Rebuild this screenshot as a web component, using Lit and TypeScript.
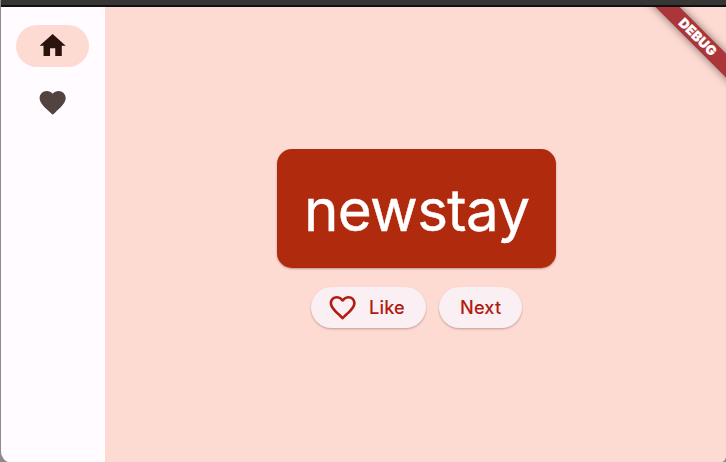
import { LitElement, html, css, svg } from "lit";
import { customElement } from "lit/decorators.js";

const homePath = svg`<path d="M10 20v-6h4v6h5v-8h3L12 3 2 12h3v8z"/>`;
const heartPath = svg`<path d="M12 21.35l-1.45-1.32C5.4 15.36 2 12.28 2 8.5 2 5.42 4.42 3 7.5 3c1.74 0 3.41.81 4.5 2.09C13.09 3.81 14.76 3 16.5 3 19.58 3 22 5.42 22 8.5c0 3.78-3.4 6.86-8.55 11.54L12 21.35z"/>`;
const heartOutlinePath = svg`<path d="M16.5 3c-1.74 0-3.41.81-4.5 2.09C10.91 3.81 9.24 3 7.5 3 4.42 3 2 5.42 2 8.5c0 3.78 3.4 6.86 8.55 11.54L12 21.35l1.45-1.32C18.6 15.36 22 12.28 22 8.5 22 5.42 19.58 3 16.5 3zm-4.4 15.55l-.1.1-.1-.1C7.14 14.24 4 11.39 4 8.5 4 6.5 5.5 5 7.5 5c1.54 0 3.04.99 3.57 2.36h1.87C13.46 5.99 14.96 5 16.5 5c2 0 3.5 1.5 3.5 3.5 0 2.89-3.14 5.74-7.9 10.05z"/>`;

@customElement("app-root")
export class AppRoot extends LitElement {
  static styles = css`
    :host {
      display: block;
      height: 462px;
      background: #8d8b8b;
      font-family: Inter, "Liberation Sans", sans-serif;
    }
    * { box-sizing: border-box; }
    .window {
      position: relative;
      display: flex;
      flex-direction: column;
      height: 462px;
      margin-left: 1px;
      overflow: hidden;
      border-radius: 0 0 5px 9px / 0 0 7px 12px;
      background: #fffbff;
    }
    .titlebar {
      flex: none;
      height: 7px;
      background: #363635;
      border-bottom: 2px solid #111;
    }
    .body { flex: 1; display: flex; min-height: 0; }
    .rail {
      width: 104.4px;
      padding: 17.5px 0.8px 0 0;
      display: flex;
      flex-direction: column;
      align-items: center;
      gap: 15.5px;
      background: #fffbff;
    }
    .dest {
      width: 73px;
      height: 42px;
      border-radius: 21px;
      display: flex;
      align-items: center;
      justify-content: center;
      color: #534340;
    }
    .selected { background: #fddad2; color: #2b130e; }
    svg { display: block; width: 31.3px; height: 31.3px; fill: currentColor; }
    .page {
      flex: 1;
      display: flex;
      flex-direction: column;
      align-items: center;
      padding: 141.5px 0 0 1.9px;
      gap: 18.5px;
      background: #fddad2;
    }
    .card {
      width: 279.5px;
      height: 119.5px;
      border-radius: 15px;
      background: #b02a0d;
      color: #fff;
      font-size: 58.4px;
      font-weight: 400;
      -webkit-text-stroke: 0.4px #fff;
      letter-spacing: -0.7px;
      line-height: 122.5px;
      text-align: center;
      white-space: nowrap;
      box-shadow: 0 1px 2px rgba(80, 20, 10, 0.35);
    }
    .actions { display: flex; gap: 13px; }
    .btn {
      display: flex;
      align-items: center;
      justify-content: center;
      height: 41.5px;
      border: 0;
      border-radius: 21px;
      padding: 0;
      background: #faeff3;
      color: #b01c12;
      font: 500 18.2px Inter, "Liberation Sans", sans-serif;
      letter-spacing: 0.13px;
      box-shadow: 0 1.3px 2px rgba(80, 20, 10, 0.28);
    }
    .like { width: 115px; gap: 10.4px; padding-right: 5px; }
    .next { width: 83px; }
    .clip {
      position: absolute;
      top: 7px;
      right: 0;
      width: 90px;
      height: 90px;
      overflow: hidden;
    }
    .banner {
      position: absolute;
      left: -8.5px;
      top: 22px;
      width: 140px;
      height: 17px;
      line-height: 17px;
      text-align: center;
      text-indent: -1px;
      transform: rotate(45deg);
      background: #ac353a;
      color: #fff;
      font-size: 13.2px;
      font-weight: 900;
      letter-spacing: 0.25px;
      -webkit-text-stroke: 0.3px #fff;
      box-shadow: 0 0 8px rgba(0, 0, 0, 0.5);
    }
  `;

  render() {
    return html`
      <div class="window">
        <div class="titlebar"></div>
        <div class="body">
          <nav class="rail">
            <div class="dest selected"><svg viewBox="0 0 24 24">${homePath}</svg></div>
            <div class="dest"><svg viewBox="0 0 24 24">${heartPath}</svg></div>
          </nav>
          <main class="page">
            <div class="card">newstay</div>
            <div class="actions">
              <button class="btn like">
                <svg viewBox="0 0 24 24">${heartOutlinePath}</svg><span>Like</span>
              </button>
              <button class="btn next">Next</button>
            </div>
          </main>
        </div>
        <div class="clip"><div class="banner">DEBUG</div></div>
      </div>
    `;
  }
}
